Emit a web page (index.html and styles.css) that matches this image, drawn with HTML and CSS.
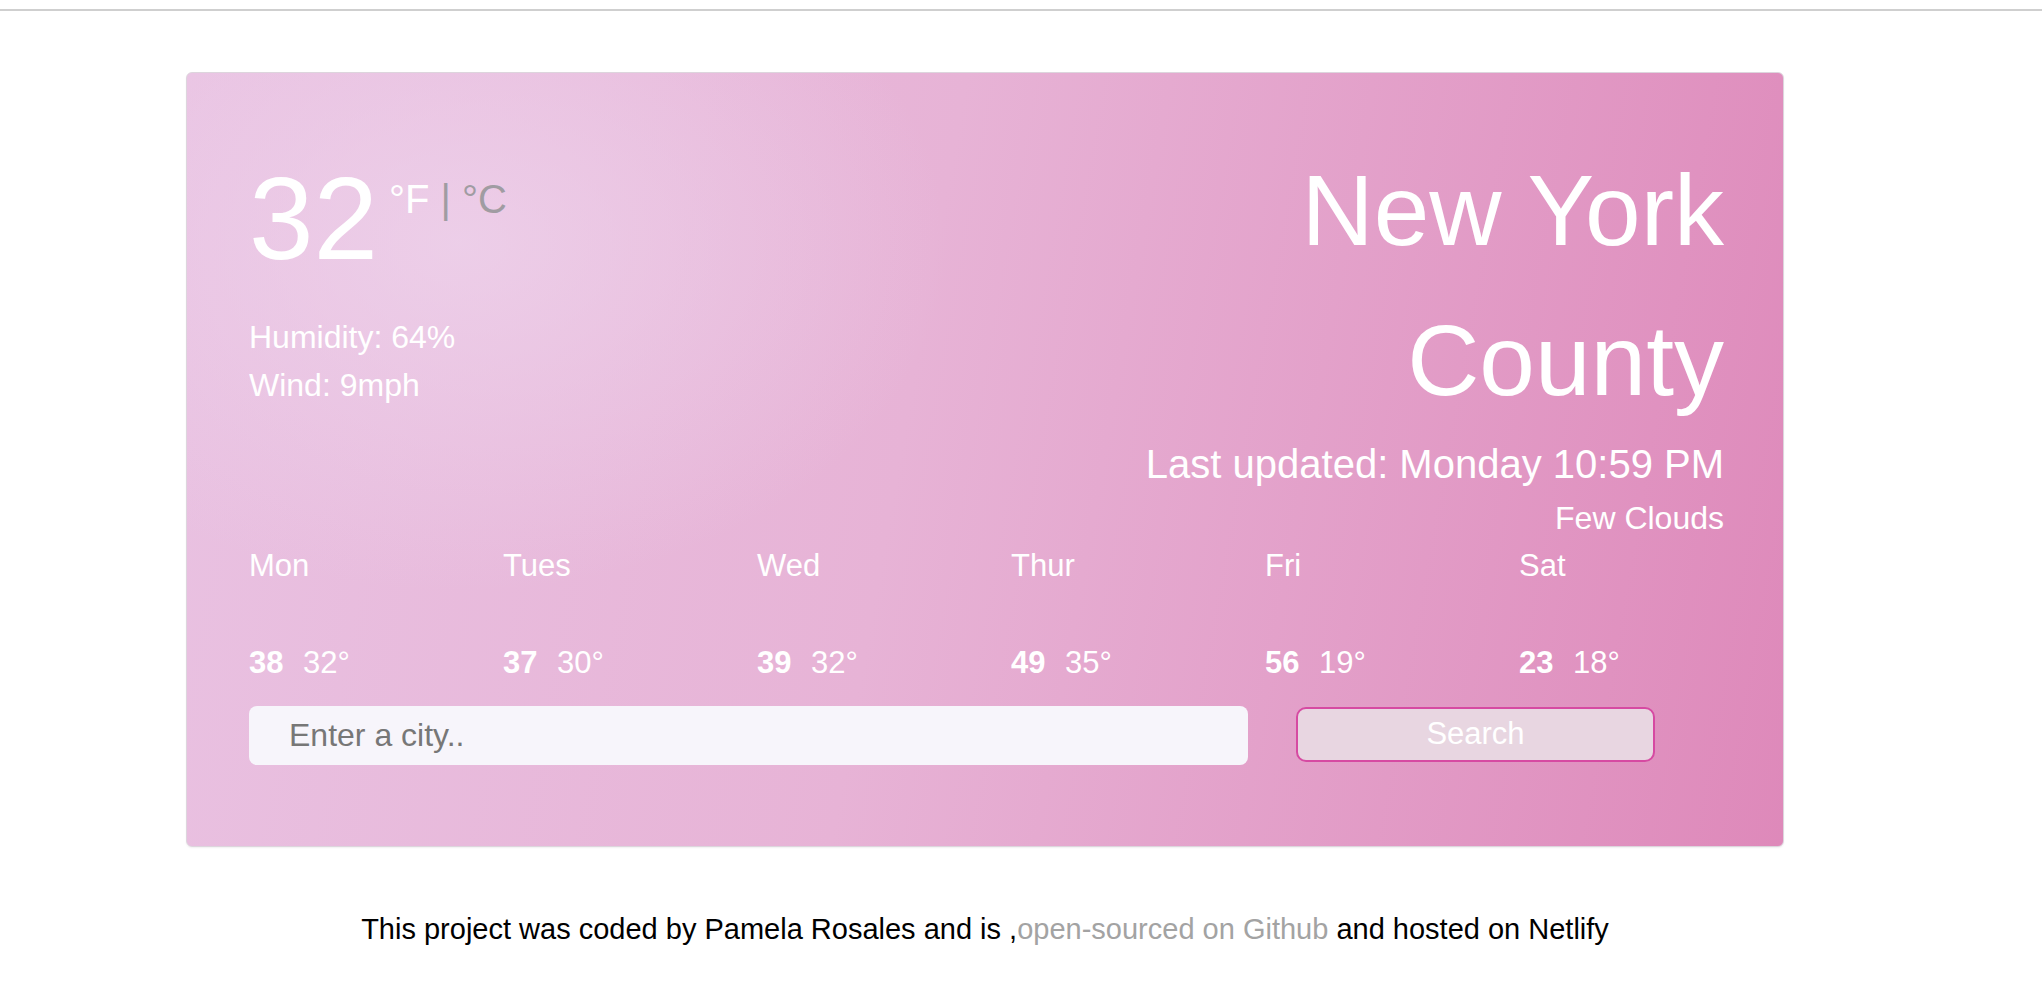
FILE: index.html
```html
<!DOCTYPE html>
<html lang="en">
<head>
<meta charset="utf-8">
<title>Weather App</title>
<link rel="stylesheet" href="styles.css">
</head>
<body>
<div class="topline"></div>
<div class="container">
  <div class="card">
    <div class="current">
      <div class="left">
        <div class="temp-row">
          <span class="temp">32</span>
          <span class="units"><a href="#" class="unit active">°F</a> <span class="sep">|</span> <a href="#" class="unit">°C</a></span>
        </div>
        <ul class="details">
          <li>Humidity: 64%</li>
          <li>Wind: 9mph</li>
        </ul>
      </div>
      <div class="right">
        <h1 class="city">New York County</h1>
        <p class="updated">Last updated: Monday 10:59 PM</p>
        <p class="desc">Few Clouds</p>
      </div>
    </div>
    <div class="forecast">
      <div class="day"><div class="day-name">Mon</div><div class="temps"><strong>38</strong> <span class="low">32°</span></div></div>
      <div class="day"><div class="day-name">Tues</div><div class="temps"><strong>37</strong> <span class="low">30°</span></div></div>
      <div class="day"><div class="day-name">Wed</div><div class="temps"><strong>39</strong> <span class="low">32°</span></div></div>
      <div class="day"><div class="day-name">Thur</div><div class="temps"><strong>49</strong> <span class="low">35°</span></div></div>
      <div class="day"><div class="day-name">Fri</div><div class="temps"><strong>56</strong> <span class="low">19°</span></div></div>
      <div class="day"><div class="day-name">Sat</div><div class="temps"><strong>23</strong> <span class="low">18°</span></div></div>
    </div>
    <form class="search" onsubmit="return false;">
      <input type="search" class="search-input" placeholder="Enter a city.." autocomplete="off">
      <button type="submit" class="search-btn">Search</button>
    </form>
  </div>
  <footer class="footer">This project was coded by Pamela Rosales and is ,<a href="#" class="gh">open-sourced on Github</a> and hosted on Netlify</footer>
</div>
</body>
</html>
```

FILE: styles.css
```css
html, body {
  margin: 0;
  padding: 0;
  background: #ffffff;
}

body {
  font-family: "Liberation Sans", Arial, Helvetica, sans-serif;
  color: #000;
}

.topline {
  margin-top: 9px;
  height: 2px;
  background: #cfcfcf;
}

.container {
  width: 1598px;
  margin-left: 186px;
  margin-top: 61px;
}

.card {
  box-sizing: border-box;
  width: 1598px;
  padding: 62px 59px 81px 62px;
  border: 1px solid #ddd5dd;
  border-radius: 6px;
  color: #ffffff;
  background:
    radial-gradient(ellipse 700px 500px at 17% 22%, rgba(238, 212, 236, 0.75), rgba(238, 212, 236, 0) 70%),
    linear-gradient(100deg, #e9c2e2 0%, #e7b3d6 45%, #de89ba 100%);
  box-shadow: 0 1px 2px rgba(0, 0, 0, 0.06);
}

.current {
  display: flex;
}

.left, .right {
  flex: 1 1 0;
  min-width: 0;
}

.temp-row {
  display: flex;
  align-items: flex-start;
  margin-top: 26px;
}

.temp {
  font-size: 116px;
  line-height: 1;
}

.units {
  font-size: 40px;
  line-height: 1;
  margin-top: 18px;
  margin-left: 11px;
  color: #a09ca2;
}

.unit {
  text-decoration: none;
  color: #a09ca2;
}

.unit.active {
  color: #ffffff;
}

.sep {
  color: #a09ca2;
}

.details {
  list-style: none;
  margin: 36px 0 0 0;
  padding: 0;
  font-size: 32px;
  line-height: 48px;
}

.right {
  text-align: right;
}

.city {
  margin: 0;
  font-size: 100px;
  font-weight: normal;
  line-height: 1.5;
}

.updated {
  margin: 5px 0 0 0;
  font-size: 40px;
  line-height: 1.2;
}

.desc {
  margin: 11px 0 0 0;
  font-size: 32px;
  line-height: 1.2;
}

.forecast {
  display: grid;
  grid-template-columns: repeat(6, 254px);
  margin-top: 10px;
  font-size: 31px;
  line-height: 1.2;
}

.day-name {
  margin-bottom: 59px;
}

.temps strong {
  font-weight: bold;
}

.low {
  margin-left: 11px;
}

.search {
  display: flex;
  align-items: flex-start;
  gap: 48px;
  margin-top: 25px;
}

.search-input {
  box-sizing: border-box;
  width: 999px;
  height: 59px;
  padding: 0 40px;
  border: none;
  border-radius: 8px;
  background: #f7f5fb;
  font-family: "Liberation Sans", Arial, sans-serif;
  font-size: 32px;
  color: #333;
  outline: none;
  -webkit-appearance: none;
  appearance: none;
}

.search-input::placeholder {
  color: #777777;
}

.search-btn {
  box-sizing: border-box;
  width: 359px;
  height: 55px;
  margin-top: 1px;
  border: 2px solid #d64aa2;
  border-radius: 10px;
  background: #e8d6e1;
  color: #ffffff;
  font-family: "Liberation Sans", Arial, sans-serif;
  font-size: 31px;
  padding: 0;
}

.footer {
  margin-top: 66px;
  text-align: center;
  font-size: 29px;
  line-height: 1.15;
  color: #000;
}

.gh {
  color: #a3a3a3;
  text-decoration: none;
}
```
